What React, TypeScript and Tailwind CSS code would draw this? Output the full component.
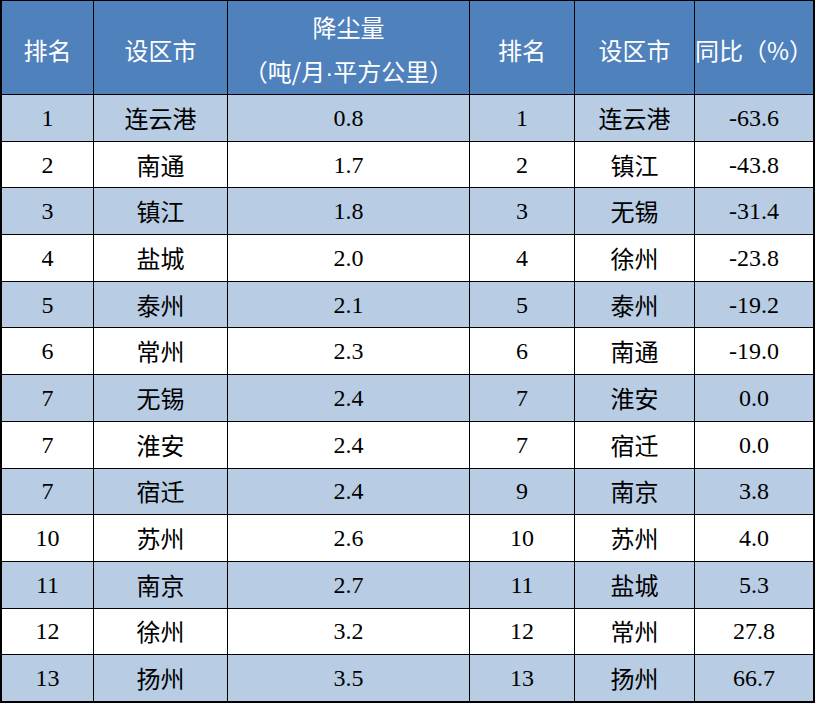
import React from 'react';

const leftRows = [
  ['1', '连云港', '0.8'],
  ['2', '南通', '1.7'],
  ['3', '镇江', '1.8'],
  ['4', '盐城', '2.0'],
  ['5', '泰州', '2.1'],
  ['6', '常州', '2.3'],
  ['7', '无锡', '2.4'],
  ['7', '淮安', '2.4'],
  ['7', '宿迁', '2.4'],
  ['10', '苏州', '2.6'],
  ['11', '南京', '2.7'],
  ['12', '徐州', '3.2'],
  ['13', '扬州', '3.5'],
];

const rightRows = [
  ['1', '连云港', '-63.6'],
  ['2', '镇江', '-43.8'],
  ['3', '无锡', '-31.4'],
  ['4', '徐州', '-23.8'],
  ['5', '泰州', '-19.2'],
  ['6', '南通', '-19.0'],
  ['7', '淮安', '0.0'],
  ['7', '宿迁', '0.0'],
  ['9', '南京', '3.8'],
  ['10', '苏州', '4.0'],
  ['11', '盐城', '5.3'],
  ['12', '常州', '27.8'],
  ['13', '扬州', '66.7'],
];

const cjk = "font-['Noto_Sans_CJK_SC',sans-serif]";
const num = "font-['Liberation_Serif','Times_New_Roman',serif]";

const App = () => {
  return (
    <div className="w-[816px] h-[704px] bg-white">
      <div className="w-[815px] h-[703px] grid grid-cols-[91px_133px_241px_104px_119px_118px] grid-rows-[93px_repeat(13,1fr)] gap-px bg-black border-t border-l-2 border-r-2 border-b-2 border-black">
        {/* header */}
        <div className={`bg-[#4f81bd] text-white text-[24px] flex items-center justify-center pt-1 ${cjk}`}>排名</div>
        <div className={`bg-[#4f81bd] text-white text-[24px] flex items-center justify-center pt-1 ${cjk}`}>设区市</div>
        <div className={`bg-[#4f81bd] text-white text-[24px] flex flex-col items-center justify-center leading-[44px] pt-1 ${cjk}`}>
          <span>降尘量</span>
          <span>
            （吨/月<span className="font-['Liberation_Sans',sans-serif]">·</span>平方公里）
          </span>
        </div>
        <div className={`bg-[#4f81bd] text-white text-[24px] flex items-center justify-center pt-1 ${cjk}`}>排名</div>
        <div className={`bg-[#4f81bd] text-white text-[24px] flex items-center justify-center pt-1 ${cjk}`}>设区市</div>
        <div className={`bg-[#4f81bd] text-white text-[24px] flex items-center justify-start whitespace-nowrap pt-1 ${cjk}`}>同比（%）</div>

        {leftRows.map((row, i) => {
          const right = rightRows[i];
          const bg = i % 2 === 0 ? 'bg-[#b8cce4]' : 'bg-white';
          return (
            <React.Fragment key={i}>
              <div className={`${bg} flex items-center justify-center text-black text-[24px] ${num}`}>{row[0]}</div>
              <div className={`${bg} flex items-center justify-center text-black text-[24px] ${cjk}`}>{row[1]}</div>
              <div className={`${bg} flex items-center justify-center text-black text-[24px] ${num}`}>{row[2]}</div>
              <div className={`${bg} flex items-center justify-center text-black text-[24px] ${num}`}>{right[0]}</div>
              <div className={`${bg} flex items-center justify-center text-black text-[24px] ${cjk}`}>{right[1]}</div>
              <div className={`${bg} flex items-center justify-center text-black text-[24px] ${num}`}>{right[2]}</div>
            </React.Fragment>
          );
        })}
      </div>
    </div>
  );
};

export default App;
